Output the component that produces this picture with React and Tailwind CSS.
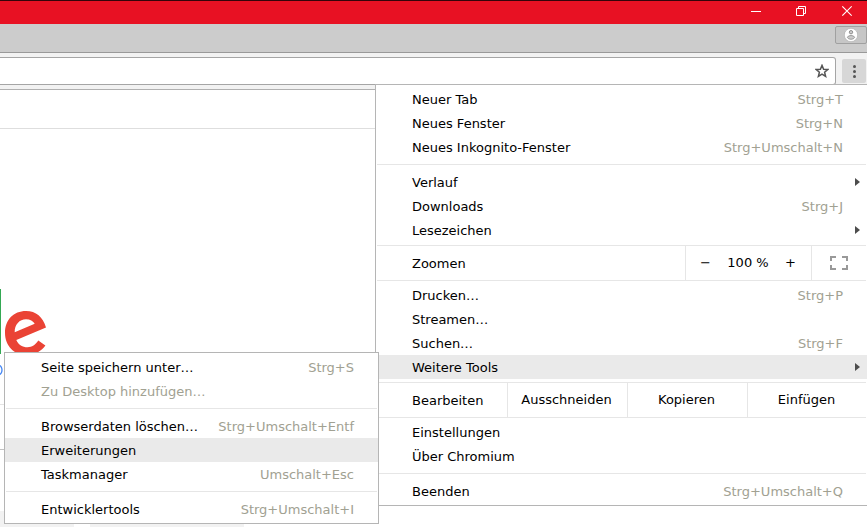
const FONT = "font-['DejaVu_Sans','Noto_Sans',sans-serif]";

function Row({ label, shortcut, submenu, active, disabled }) {
  return (
    <div
      className={`flex h-6 shrink-0 items-center justify-between whitespace-nowrap pl-9 ${
        active ? 'bg-[#eaeaea]' : ''
      }`}
    >
      <span className={`pt-0.5 ${disabled ? 'text-[#a1a192]' : 'text-black'}`}>{label}</span>
      {shortcut && <span className="mr-6 pt-0.5 text-[#a1a192]">{shortcut}</span>}
      {submenu && (
        <svg className="mr-[7px]" width="5" height="8" viewBox="0 0 5 8">
          <path d="M0 0L5 4L0 8Z" fill="#4d4d4d" />
        </svg>
      )}
    </div>
  );
}

function Separator() {
  return <div className="mx-px my-[5px] h-px shrink-0 bg-[#e6e6e6]" />;
}

function WindowBar() {
  return (
    <div className="flex h-6 shrink-0 justify-end border-t border-[#35040a] bg-[#e81123] pr-[15px]">
      <svg width="102" height="23" viewBox="0 0 102 23" fill="none" stroke="#fff">
        <path d="M1 10.5H11" />
        <path d="M46.5 7.5H53.5V14.5H46.5Z" />
        <path d="M48.5 7.5V5.5H55.5V12.5H53.5" />
        <path d="M92.3 5.3L101.7 14.7M101.7 5.3L92.3 14.7" strokeWidth="1.2" />
      </svg>
    </div>
  );
}

function TabStrip() {
  return (
    <div className="flex h-[29px] shrink-0 justify-end border-b border-[#999] bg-[#ccc]">
      <div className="mt-0.5 flex h-[18px] w-8 items-center justify-center rounded-[2px] border border-[#a0a0a0] bg-[#c6c6c6]">
        <svg width="14" height="14" viewBox="0 0 14 14">
          <circle cx="7" cy="7" r="6.7" fill="#fff" stroke="#aaa" strokeWidth=".6" />
          <circle cx="7" cy="4.2" r="1.7" fill="#ccc" stroke="#888" strokeWidth=".9" />
          <path d="M3.300 9.500Q3.800 7.500 7 7.500Q10.200 7.500 10.700 9.500Q9.500 11.300 7 11.300Q4.500 11.300 3.300 9.500Z" fill="#ccc" stroke="#888" strokeWidth=".8" />
        </svg>
      </div>
    </div>
  );
}

function Toolbar() {
  return (
    <div className="flex h-[37px] shrink-0 border-b border-[#b0b0b0] bg-[#f2f2f2] pt-1">
      <div className="flex h-7 w-[836px] items-center justify-end rounded-r-[3px] border border-l-0 border-[#a5a5a5] bg-white pr-1.5">
        <svg width="14" height="14" viewBox="0 0 14 14" fill="none" stroke="#555" strokeWidth="1.5">
          <path d="M7 1.4L8.6 5.2L12.8 5.5L9.6 8.2L10.6 12.3L7 10.1L3.4 12.3L4.4 8.2L1.2 5.5L5.4 5.2Z" />
        </svg>
      </div>
      <div className="ml-1.5 mt-0.5 flex h-6 w-6 items-center justify-center rounded-[2px] bg-[#d7d7d7]">
        <svg width="6" height="14" viewBox="0 0 6 14" fill="#555">
          <circle cx="3.500" cy="2.500" r="1.500" />
          <circle cx="3.500" cy="7.500" r="1.500" />
          <circle cx="3.500" cy="12.400" r="1.500" />
        </svg>
      </div>
    </div>
  );
}

function PageContent() {
  return (
    <div className="flex flex-1 flex-col overflow-hidden">
      <div className="h-[39px] shrink-0 border-b border-[#dedede]" />
      <svg className="mt-[160px] block shrink-0" width="60" height="87" viewBox="0 289 60 87">
        <path d="M0 289H1V354H0Z" fill="#34a853" />
        <path
          fillRule="evenodd"
          fill="#ea4335"
          d="M46 327.5C43 317 36 311 26 311C13.500 311 5 320 5 332.800C5 346 14 355 26.500 355C35.500 355 41.500 351 45.400 345.600L38.300 340.600C35.500 344.800 32 347.300 27.500 347.300C22.500 347.300 18.500 345 16.300 340ZM14.700 332.300C14.500 324.500 19.500 319.200 26 319.200C30 319.200 33.300 321 34.700 323.800Z"
        />
        <ellipse cx="-1" cy="370" rx="3" ry="4.500" fill="none" stroke="#4285f4" strokeWidth="1.300" />
      </svg>
      <div className="mt-7 h-[46px] w-[300px] shrink-0 border-b border-t border-b-[#c2c2c2] border-t-[#e4e4e4]" />
      <div className="mt-[61px] flex flex-1 gap-4">
        <div className="w-[74px] bg-[#f2f2f2]" />
        <div className="w-[154px] bg-[#f2f2f2]" />
      </div>
    </div>
  );
}

function ZoomRow() {
  return (
    <div className="mx-px mt-[3px] flex h-9 shrink-0 border-y border-[#e6e6e6] text-black">
      <span className="flex-1 pl-[35px] leading-[36px]">Zoomen</span>
      <div className="flex w-[127px] border-x border-[#e6e6e6] leading-[34px]">
        <span className="w-[39px] text-center">−</span>
        <span className="flex-1 pl-px text-center">100 %</span>
        <span className="w-[41px] text-center">+</span>
      </div>
      <div className="flex w-[54px] items-center justify-center">
        <svg width="18" height="14" viewBox="0 0 18 14" fill="none" stroke="#999" strokeWidth="2">
          <path d="M1 5V1H6M12 1H17V5M17 9V13H12M6 13H1V9" />
        </svg>
      </div>
    </div>
  );
}

function EditRow() {
  return (
    <div className="mx-px mt-[3px] flex h-9 shrink-0 border-y border-[#e6e6e6] text-black">
      <span className="flex-1 pl-[35px] leading-[36px]">Bearbeiten</span>
      {['Ausschneiden', 'Kopieren', 'Einfügen'].map((action) => (
        <span key={action} className="w-[120px] border-l border-[#e6e6e6] pr-0.5 text-center leading-[34px] last:w-[119px] last:pr-px">
          {action}
        </span>
      ))}
    </div>
  );
}

function MainMenu() {
  return (
    <div className="absolute left-[375px] top-[84px] flex h-[422px] w-[492px] flex-col border-y border-l border-[#b5b5b5] bg-white pt-0.5">
      <Row label="Neuer Tab" shortcut="Strg+T" />
      <Row label="Neues Fenster" shortcut="Strg+N" />
      <Row label="Neues Inkognito-Fenster" shortcut="Strg+Umschalt+N" />
      <Separator />
      <Row label="Verlauf" submenu />
      <Row label="Downloads" shortcut="Strg+J" />
      <Row label="Lesezeichen" submenu />
      <ZoomRow />
      <div className="h-0.5 shrink-0" />
      <Row label="Drucken…" shortcut="Strg+P" />
      <Row label="Streamen…" />
      <Row label="Suchen…" shortcut="Strg+F" />
      <Row label="Weitere Tools" submenu active />
      <EditRow />
      <div className="h-0.5 shrink-0" />
      <Row label="Einstellungen" />
      <Row label="Über Chromium" />
      <Separator />
      <Row label="Beenden" shortcut="Strg+Umschalt+Q" />
    </div>
  );
}

function ToolsMenu() {
  return (
    <div className="absolute left-1 top-[352px] flex h-[172px] w-[375px] flex-col border border-[#b5b5b5] bg-white pt-0.5">
      <Row label="Seite speichern unter…" shortcut="Strg+S" />
      <Row label="Zu Desktop hinzufügen…" disabled />
      <Separator />
      <Row label="Browserdaten löschen…" shortcut="Strg+Umschalt+Entf" />
      <Row label="Erweiterungen" active />
      <Row label="Taskmanager" shortcut="Umschalt+Esc" />
      <Separator />
      <Row label="Entwicklertools" shortcut="Strg+Umschalt+I" />
    </div>
  );
}

export default function App() {
  return (
    <div className={`relative flex h-[527px] w-[867px] flex-col overflow-hidden bg-white text-[13px] ${FONT}`}>
      <WindowBar />
      <TabStrip />
      <Toolbar />
      <PageContent />
      <MainMenu />
      <ToolsMenu />
    </div>
  );
}
